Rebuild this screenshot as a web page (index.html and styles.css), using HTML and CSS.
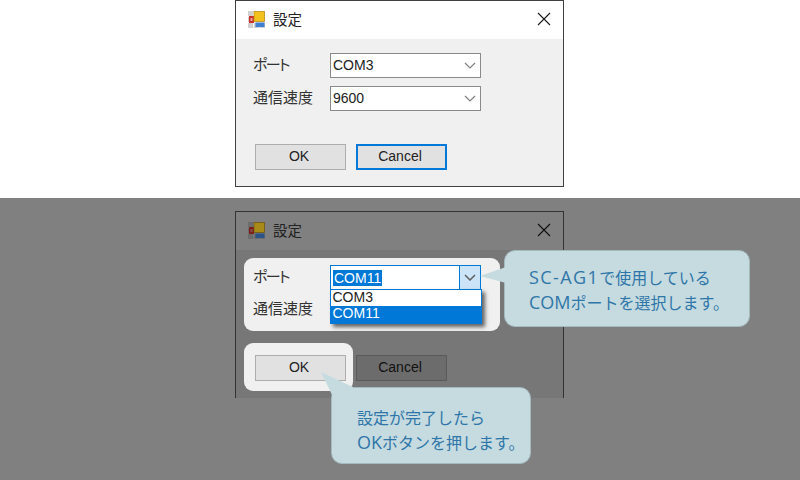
FILE: index.html
```html
<!DOCTYPE html>
<html lang="ja">
<head>
<meta charset="utf-8">
<title>設定</title>
<link rel="stylesheet" href="styles.css">
</head>
<body>
<div class="page">
  <section class="screen screen-top">
    <div class="dialog">
      <header class="titlebar">
        <svg class="app-icon" viewBox="0 0 17 17" width="17" height="17"><rect width="17" height="17" fill="#d0d0d0"/><path d="M0 5.5h17M0 11.5h17M5.5 0v17M11.5 0v17" stroke="#fff" stroke-width=".8"/><rect x="1" y="5" width="5" height="7" fill="#c8302a"/><rect x="2.5" y="7" width="2" height="3" fill="#f0a0a0"/><rect x="6" y="0.5" width="10.5" height="10" fill="#f3c11c" stroke="#b98a10" stroke-width=".7"/><rect x="7.5" y="11.5" width="9" height="4.5" fill="#3f7fd0"/></svg>
        <span class="title">設定</span>
        <svg class="close" viewBox="0 0 14 14" width="14" height="14"><path d="M1 1l12 12M13 1L1 13" stroke="#1a1a1a" stroke-width="1.1" fill="none"/></svg>
      </header>
      <div class="body">
        <div class="row">
          <span class="label label-kana">ポート</span>
          <div class="combo"><span class="combo-text">COM3</span><span class="chev"><svg viewBox="0 0 12 7" width="12" height="7"><path d="M1 1l5 5 5-5" stroke="#808080" stroke-width="1.2" fill="none"/></svg></span></div>
        </div>
        <div class="row">
          <span class="label">通信速度</span>
          <div class="combo"><span class="combo-text">9600</span><span class="chev"><svg viewBox="0 0 12 7" width="12" height="7"><path d="M1 1l5 5 5-5" stroke="#808080" stroke-width="1.2" fill="none"/></svg></span></div>
        </div>
        <div class="buttons">
          <button class="btn">OK</button>
          <button class="btn btn-focus">Cancel</button>
        </div>
      </div>
    </div>
  </section>

  <section class="screen screen-dim">
    <div class="dialog dialog-dim">
      <header class="titlebar">
        <svg class="app-icon" viewBox="0 0 17 17" width="17" height="17"><rect width="17" height="17" fill="#6c6c6c"/><path d="M0 5.5h17M0 11.5h17M5.5 0v17M11.5 0v17" stroke="#808080" stroke-width=".8"/><rect x="1" y="5" width="5" height="7" fill="#7c1e1a"/><rect x="2.5" y="7" width="2" height="3" fill="#8a5050"/><rect x="6" y="0.5" width="10.5" height="10" fill="#a88a18" stroke="#705510" stroke-width=".7"/><rect x="7.5" y="11.5" width="9" height="4.5" fill="#2a5488"/></svg>
        <span class="title">設定</span>
        <svg class="close" viewBox="0 0 14 14" width="14" height="14"><path d="M1 1l12 12M13 1L1 13" stroke="#0d0d0d" stroke-width="1.1" fill="none"/></svg>
      </header>
      <div class="body body-dim">
        <div class="spot spot-form">
          <div class="row">
            <span class="label label-kana">ポート</span>
            <div class="combo combo-open">
              <span class="combo-text"><span class="selected">COM11</span></span>
              <span class="chev chev-open"><svg viewBox="0 0 12 7" width="12" height="7"><path d="M1 1l5 5 5-5" stroke="#606060" stroke-width="1.5" fill="none"/></svg></span>
              <ul class="dropdown">
                <li class="option">COM3</li>
                <li class="option option-active">COM11</li>
              </ul>
            </div>
          </div>
          <div class="row">
            <span class="label">通信速度</span>
          </div>
        </div>
        <div class="buttons-dim">
          <div class="spot spot-ok"><button class="btn">OK</button></div>
          <button class="btn btn-dim">Cancel</button>
        </div>
      </div>
    </div>

    <div class="callout callout-port">
      <svg class="tail tail-port" viewBox="0 0 27 18" width="27" height="18"><path d="M0 9L26 0V16Z" fill="#c5dbe0"/></svg>
      <p><span class="latin latin-wide">SC-AG1</span>で使用している<br><span class="latin">COM</span>ポートを選択します。</p>
    </div>
    <div class="callout callout-ok">
      <svg class="tail tail-ok" viewBox="0 0 33 25" width="33" height="25"><path d="M0 0L32 15L32 25L12 25Z" fill="#c5dbe0"/></svg>
      <p>設定が完了したら<br><span class="latin">OK</span>ボタンを押します。</p>
    </div>
  </section>
</div>
</body>
</html>
```
FILE: styles.css
```css
* { box-sizing: border-box; }
html, body { margin: 0; padding: 0; }
body {
  font-family: "Liberation Sans", "Noto Sans CJK JP", sans-serif;
  background: #fff;
  color: #1a1a1a;
}
.page { width: 800px; height: 480px; overflow: hidden; position: relative; }

.screen-top { height: 198px; background: #fff; padding-left: 235px; }
.screen-dim { height: 282px; background: #808080; padding: 13px 0 0 235px; position: relative; }

.dialog {
  width: 329px;
  height: 187px;
  border: 1px solid #404040;
  display: flex;
  flex-direction: column;
}
.dialog-dim { border-bottom: 0; border-color: #333; background: #777; height: 187px; }

.titlebar {
  height: 38px;
  flex: none;
  display: flex;
  align-items: center;
  padding: 0 12px 2px 12px;
  background: #fff;
}
.dialog-dim .titlebar { background: #808080; }
.app-icon { flex: none; }
.title {
  margin-left: 8px;
  font: 14.5px/1 "Noto Sans CJK JP", sans-serif;
  color: #222;
}
.close { margin-left: auto; }

.body {
  flex: 1;
  background: #f0f0f0;
  padding: 14px 0 0 17px;
  display: flex;
  flex-direction: column;
  gap: 8px;
}
.body-dim { background: #777; padding: 8px 0 0 8px; gap: 12px; }

.row { display: flex; align-items: center; height: 25px; }
.label {
  width: 77px;
  flex: none;
  font: 15px/1 "Noto Sans CJK JP", sans-serif;
  color: #333;
  padding-bottom: 4px;
}
.label-kana { letter-spacing: -1.6px; font-feature-settings: "palt"; }
.combo {
  width: 151px;
  height: 25px;
  background: #fff;
  border: 1.5px solid #8a8a8a;
  display: flex;
  align-items: center;
  position: relative;
  font-size: 14px;
}
.combo-text { flex: 1; padding: 0 0 2px 2px; color: #222; line-height: 1; }
.chev { width: 21px; height: 100%; display: flex; align-items: center; justify-content: center; }

.buttons { display: flex; gap: 10px; margin-top: 25px; padding-left: 2px; }
.btn {
  width: 91px;
  height: 26px;
  padding: 0 3px 2px 0;
  background: #e1e1e1;
  border: 1.5px solid #adadad;
  font: 14px/1 "Liberation Sans", sans-serif;
  color: #222;
}
.btn-focus { border: 2.5px solid #0078d7; }
.btn-dim { background: #6c6c6c; border: 1.5px solid #5a5a5a; color: #111; margin-top: 12px; }

.spot { background: #f0f0f0; border-radius: 9px; }
.spot-form { width: 256px; height: 73px; padding: 7px 0 0 9px; display: flex; flex-direction: column; gap: 7px; }
.buttons-dim { display: flex; gap: 3px; align-items: flex-start; }
.spot-ok { width: 109px; height: 48px; padding: 12px 0 0 11px; }

.combo-open { border-color: #0078d7; }
.combo-open .combo-text { padding-bottom: 0; }
.selected { background: #0078d7; color: #fff; display: inline-block; padding: 1px; }
.chev-open { background: #cce4f7; border-left: 1.5px solid #0078d7; }
.dropdown {
  position: absolute;
  left: -1.5px;
  top: 23px;
  width: 152px;
  margin: 0;
  padding: 0;
  list-style: none;
  background: #fff;
  border: 1px solid #0078d7;
  box-shadow: 3px 3px 4px rgba(0,0,0,.6);
  font-size: 14px;
  z-index: 2;
}
.option { height: 16px; line-height: 14px; padding-left: 2px; color: #222; }
.option-active { background: #0078d7; color: #fff; height: 17px; }

.callout {
  position: absolute;
  background: #c5dbe0;
  border: 1px solid #a3babf;
  border-radius: 11px;
  font: 16px/25px "Noto Sans CJK JP", sans-serif;
  color: #2f76a8;
  z-index: 3;
}
.callout p { margin: 0; }
.latin { font-family: "Open Sans", sans-serif; font-size: 18px; line-height: 1; }
.latin-wide { letter-spacing: 1.4px; }
.callout-port { left: 504px; top: 52px; width: 246px; height: 77px; padding: 14px 0 0 24px; }
.callout-ok { left: 331px; top: 189px; width: 200px; height: 77px; padding: 17px 0 0 25px; }
.tail { position: absolute; }
.tail-port { left: -25px; top: 16px; }
.tail-ok { left: -11px; top: -16px; }
```
